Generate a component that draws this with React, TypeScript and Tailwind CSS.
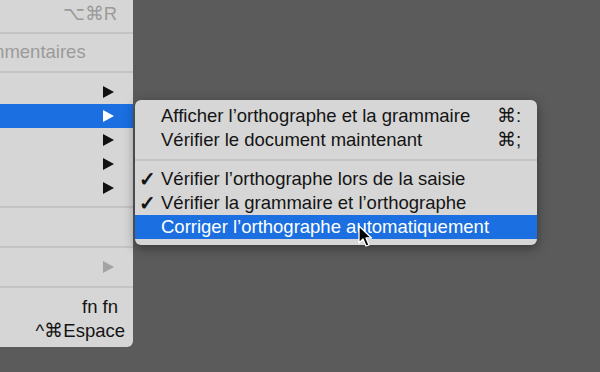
import React from 'react';

const Arrow: React.FC<{ color?: string }> = ({ color = '#111' }) => (
  <svg width="11" height="12" viewBox="0 0 11 12" className="shrink-0">
    <path d="M0 0 L11 6 L0 12 Z" fill={color} />
  </svg>
);

const Sep: React.FC<{ h: string }> = ({ h }) => (
  <div className={`flex items-center ${h}`}>
    <div className="h-[2px] w-full bg-[#c3c3c3]" />
  </div>
);

const LeftRow: React.FC<{ children?: React.ReactNode; active?: boolean; pr?: string }> = ({ children, active, pr = 'pr-[19px]' }) => (
  <div className={`flex h-6 items-center justify-end ${pr} ${active ? 'bg-[#1b6fe1]' : ''}`}>{children}</div>
);

const SubRow: React.FC<{ label: string; check?: boolean; shortcut?: string; active?: boolean }> = ({ label, check, shortcut, active }) => (
  <div className={`flex h-6 items-center ${active ? 'bg-[#1b6fe1] text-white' : 'text-[#141414]'}`}>
    <span className="w-[26px] pl-[4px] text-[20px] font-bold leading-none">{check ? '✓' : ''}</span>
    <span className="flex-1">{label}</span>
    {shortcut && <span className="w-[40px]">{shortcut}</span>}
  </div>
);

const Cursor = () => (
  <svg width="16" height="24" viewBox="0 0 16 24" className="absolute left-[358px] top-[225px]">
    <path d="M1 1 L1 18 L5 14 L8 21 L11 20 L8 13 L13.5 13 Z" fill="#000" stroke="#fff" strokeWidth="1.3" strokeLinejoin="round" />
  </svg>
);

export default function App() {
  return (
    <div
      className="relative h-[372px] w-[600px] overflow-hidden bg-[#5b5b5b] text-[18.5px]"
      style={{ fontFamily: '"Liberation Sans", Arial, sans-serif' }}
    >
      {/* main menu, cut at the left and top */}
      <div className="flex h-[347px] w-[133px] flex-col overflow-hidden rounded-br-[6px] bg-[#d6d6d6] pt-[2px] pb-1">
        <LeftRow pr="pr-[16px]"><span className="text-[#9b9b9b]">⌥⌘R</span></LeftRow>
        <Sep h="h-[14px]" />
        <div className="flex h-6 items-center overflow-hidden">
          <span className="-ml-[11px] whitespace-nowrap text-[#9b9b9b]">mmentaires</span>
        </div>
        <Sep h="h-[16px]" />
        <LeftRow><Arrow /></LeftRow>
        <LeftRow active><Arrow color="#fff" /></LeftRow>
        <LeftRow><Arrow /></LeftRow>
        <LeftRow><Arrow /></LeftRow>
        <LeftRow><Arrow /></LeftRow>
        <Sep h="h-[14px]" />
        <LeftRow />
        <Sep h="h-[17px]" />
        <LeftRow><Arrow color="#a3a3a3" /></LeftRow>
        <Sep h="h-[16px]" />
        <LeftRow pr="pr-[15px]"><span className="text-[#141414]">fn fn</span></LeftRow>
        <LeftRow pr="pr-[8px]"><span className="text-[#141414]">^⌘Espace</span></LeftRow>
      </div>

      {/* submenu */}
      <div className="absolute left-[135px] top-[100px] flex w-[402px] flex-col overflow-hidden rounded-[6px] bg-[#d6d6d6] pt-1 pb-[6px] shadow-[0_3px_12px_rgba(0,0,0,0.4)]">
        <SubRow label="Afficher l’orthographe et la grammaire" shortcut="⌘:" />
        <SubRow label="Vérifier le document maintenant" shortcut="⌘;" />
        <Sep h="h-[15px]" />
        <SubRow check label="Vérifier l’orthographe lors de la saisie" />
        <SubRow check label="Vérifier la grammaire et l’orthographe" />
        <SubRow active label="Corriger l’orthographe automatiquement" />
      </div>

      <Cursor />
    </div>
  );
}
